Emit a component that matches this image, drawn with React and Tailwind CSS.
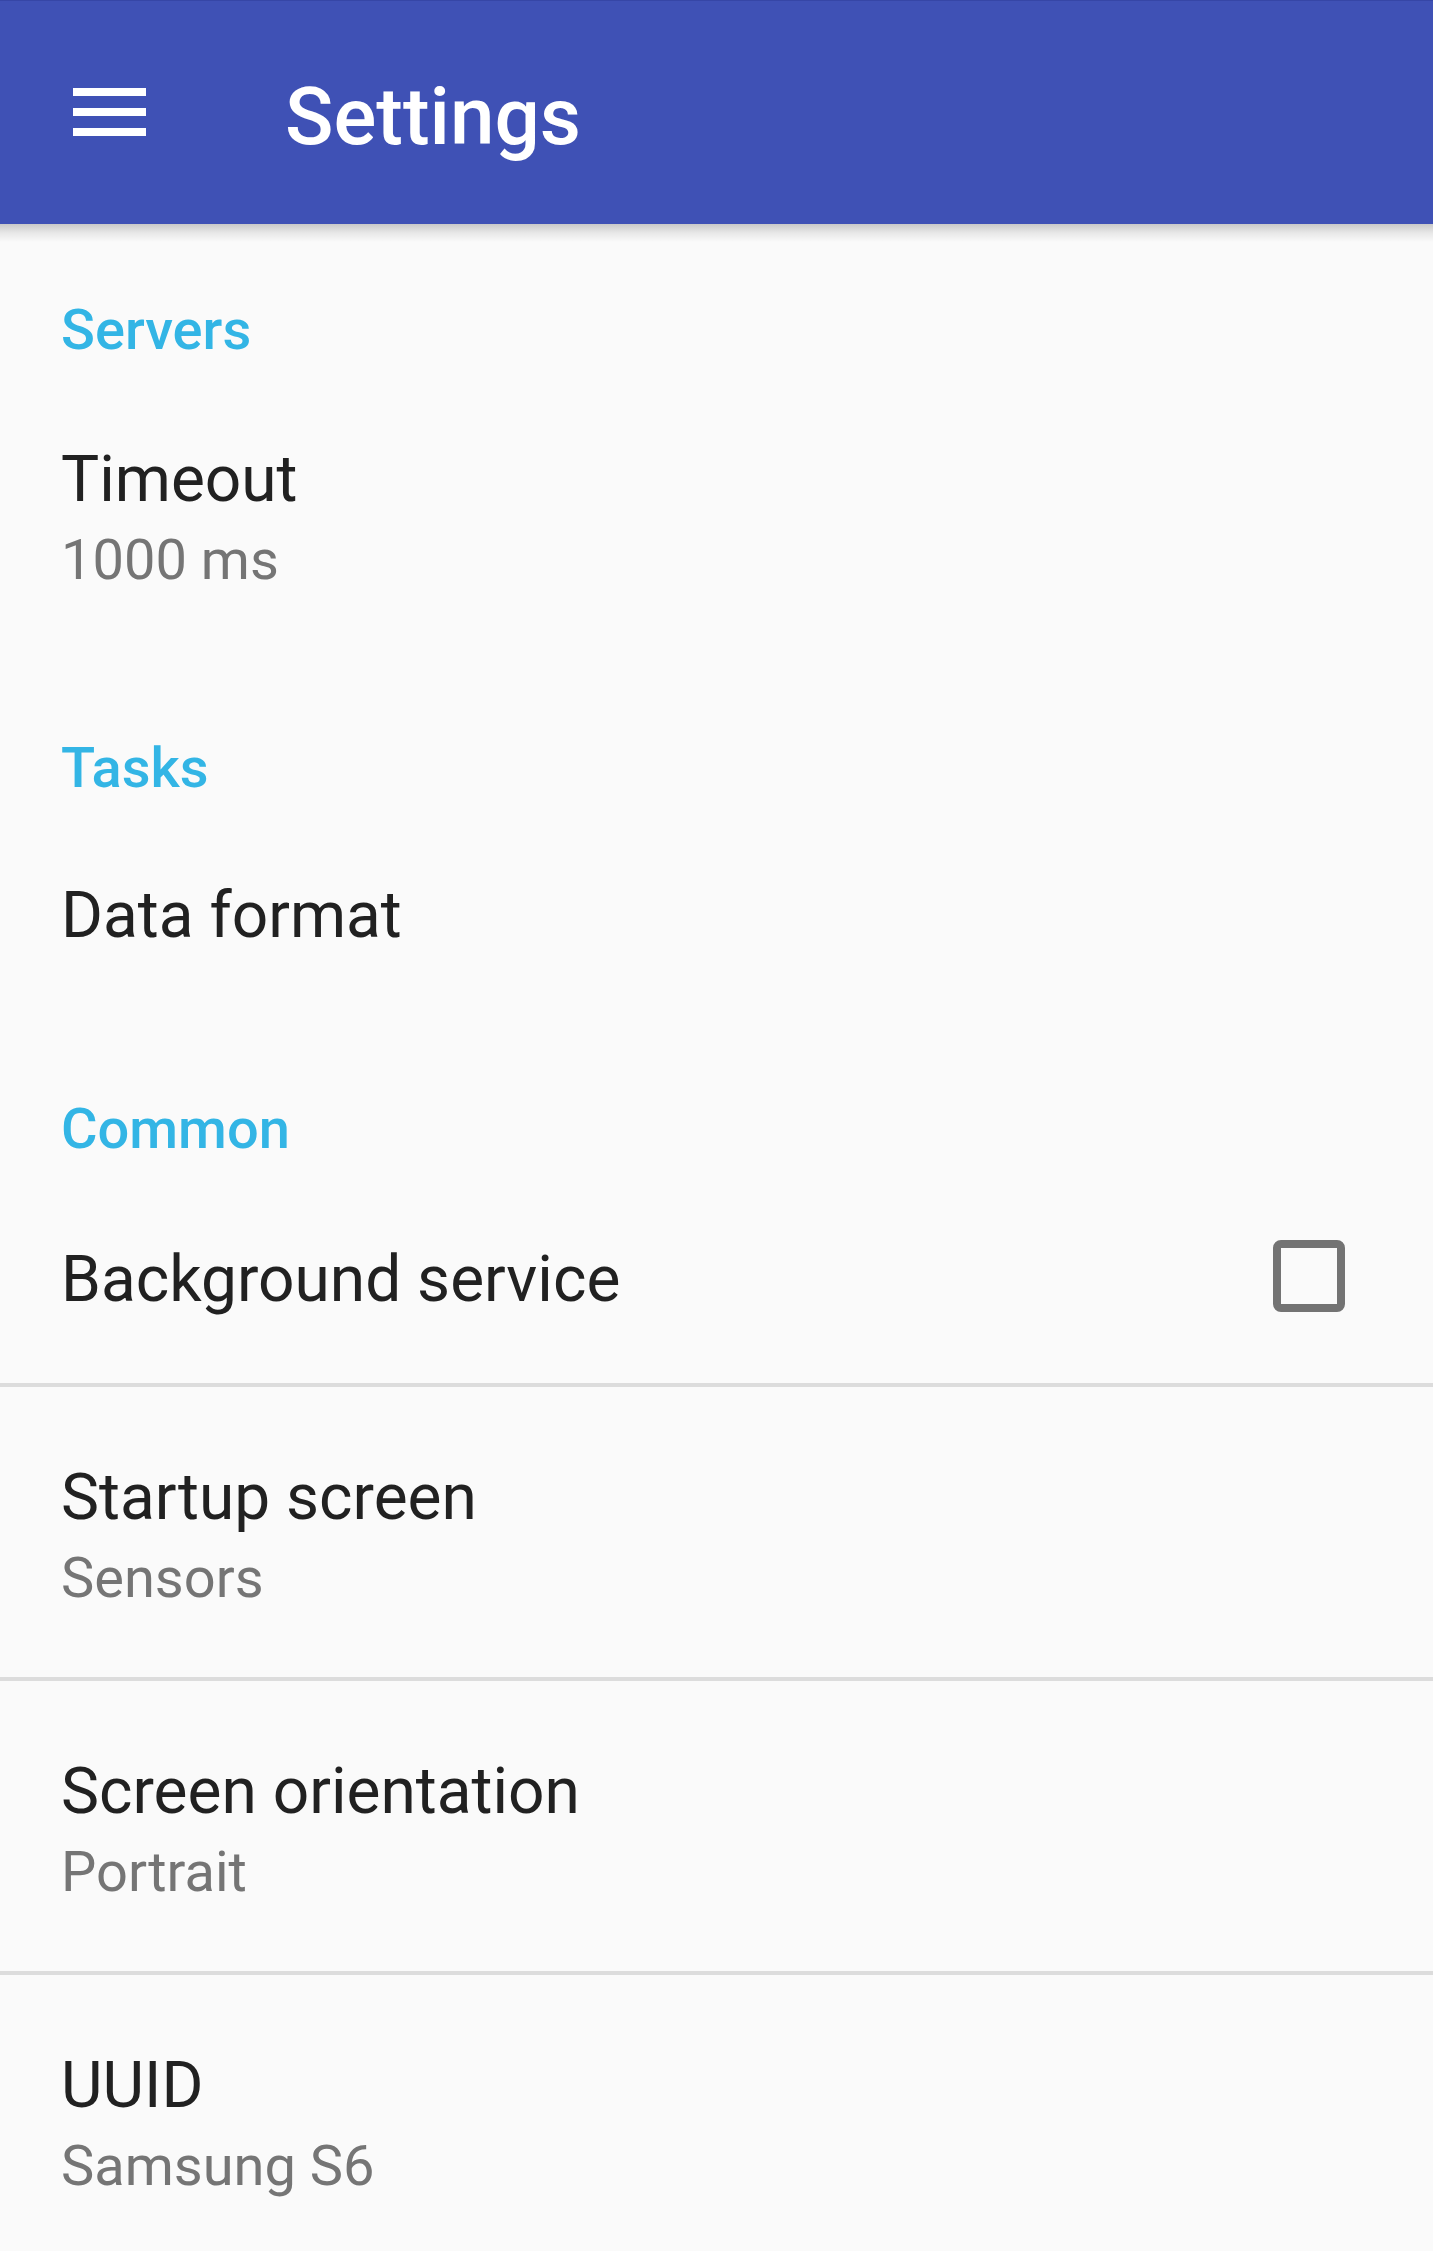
export default function App() {
  const font = { fontFamily: "Roboto, 'Noto Sans', sans-serif" };
  return (
    <div className="min-h-[2251px] w-full bg-[#fafafa] overflow-hidden" style={font}>
      <header className="relative h-[224px] bg-[#3f51b5] border-t border-[#3646a6] flex items-start">
        <div className="ml-[73px] mt-[87px] w-[73px] flex flex-col gap-[12px]">
          <div className="h-[8px] bg-white" />
          <div className="h-[8px] bg-white" />
          <div className="h-[8px] bg-white" />
        </div>
        <h1 className="ml-[139px] mt-[68px] text-[80px] leading-[96px] font-medium text-white">Settings</h1>
        <div className="absolute left-0 right-0 top-full h-[18px] bg-gradient-to-b from-[#c9c9c9] via-[#e8e8e8] to-[#fafafa]" />
      </header>

      <main className="flex flex-col pl-[61px]">
        <div className="mt-[74px] text-[56px] leading-[64px] font-medium text-[#33b5e5]">Servers</div>
        <div className="mt-[80px] text-[64px] leading-[76px] text-[#212121]">Timeout</div>
        <div className="mt-[10px] text-[56px] leading-[64px] text-[#757575]">1000 ms</div>

        <div className="mt-[144px] text-[56px] leading-[64px] font-medium text-[#33b5e5]">Tasks</div>
        <div className="mt-[78px] text-[64px] leading-[76px] text-[#212121]">Data format</div>

        <div className="mt-[143px] text-[56px] leading-[64px] font-medium text-[#33b5e5]">Common</div>
        <div className="mt-[81px] flex items-start justify-between pr-[88px]">
          <div className="text-[64px] leading-[76px] text-[#212121]">Background service</div>
          <div className="mt-[-2px] w-[72px] h-[72px] rounded-[8px] border-[8px] border-[#737373]" />
        </div>
      </main>

      <div className="mt-[65px] h-[4px] bg-[#dcdcdc]" />
      <Item title="Startup screen" summary="Sensors" />
      <div className="h-[4px] bg-[#dcdcdc]" />
      <Item title="Screen orientation" summary="Portrait" />
      <div className="h-[4px] bg-[#dcdcdc]" />
      <Item title="UUID" summary="Samsung S6" />
    </div>
  );
}

function Item({ title, summary }) {
  return (
    <div className="h-[290px] pl-[61px] pt-[73px] flex flex-col">
      <div className="text-[64px] leading-[76px] text-[#212121]">{title}</div>
      <div className="mt-[10px] text-[56px] leading-[64px] text-[#757575]">{summary}</div>
    </div>
  );
}
